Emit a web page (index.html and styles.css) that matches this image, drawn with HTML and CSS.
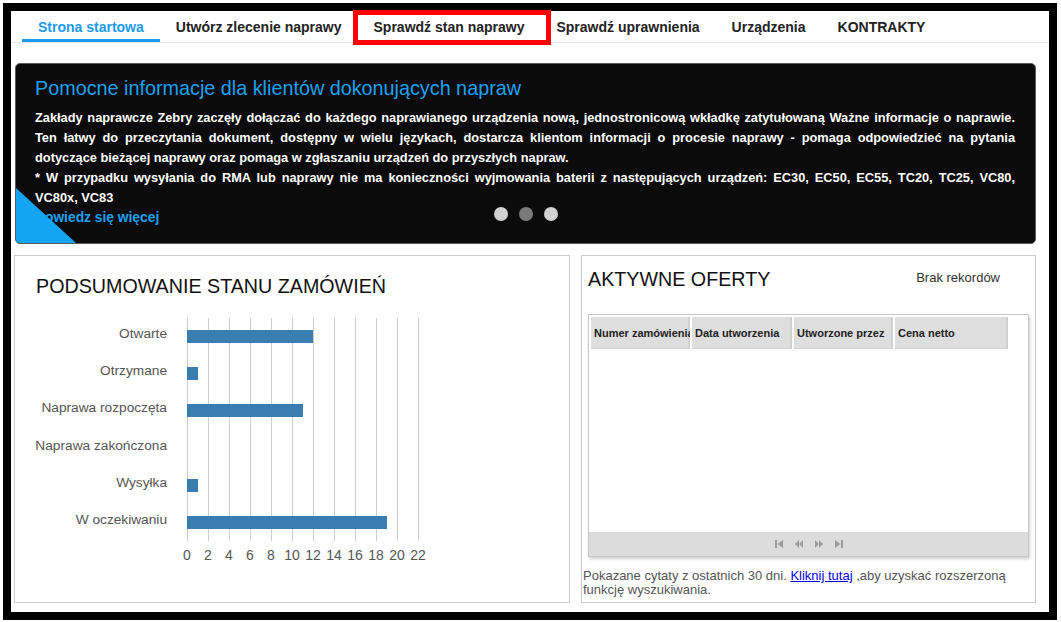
FILE: index.html
```html
<!DOCTYPE html>
<html lang="pl">
<head>
    <meta charset="UTF-8">
    <meta name="viewport" content="width=device-width, initial-scale=1.0">
    <title>Strona startowa</title>
    <link rel="stylesheet" href="styles.css">
</head>
<body>
    <div class="frame">
        <nav class="tabs">
            <a class="tab active">Strona startowa</a>
            <a class="tab">Utwórz zlecenie naprawy</a>
            <a class="tab">Sprawdź stan naprawy</a>
            <a class="tab">Sprawdź uprawnienia</a>
            <a class="tab">Urządzenia</a>
            <a class="tab">KONTRAKTY</a>
        </nav>
        <div class="callout"></div>

        <section class="banner">
            <h2 class="banner-title">Pomocne informacje dla klientów dokonujących napraw</h2>
            <p class="banner-text">Zakłady naprawcze Zebry zaczęły dołączać do każdego naprawianego urządzenia nową, jednostronicową wkładkę zatytułowaną Ważne informacje o naprawie. Ten łatwy do przeczytania dokument, dostępny w wielu językach, dostarcza klientom informacji o procesie naprawy - pomaga odpowiedzieć na pytania dotyczące bieżącej naprawy oraz pomaga w zgłaszaniu urządzeń do przyszłych napraw.<br>* W przypadku wysyłania do RMA lub naprawy nie ma konieczności wyjmowania baterii z następujących urządzeń: EC30, EC50, EC55, TC20, TC25, VC80, VC80x,&nbsp;VC83<br><a class="more">Dowiedz się więcej</a></p>
            <div class="dots">
                <span class="dot"></span>
                <span class="dot current"></span>
                <span class="dot"></span>
            </div>
            <div class="corner"></div>
        </section>

        <div class="panels">
            <section class="panel summary">
                <h3 class="panel-title">PODSUMOWANIE STANU ZAMÓWIEŃ</h3>
                <div class="chart">
                    <div class="labels">
                        <span>Otwarte</span>
                        <span>Otrzymane</span>
                        <span>Naprawa rozpoczęta</span>
                        <span>Naprawa zakończona</span>
                        <span>Wysyłka</span>
                        <span>W oczekiwaniu</span>
                    </div>
                    <div class="plot">
                        <div class="row"><span class="bar" style="width: 126px"></span></div>
                        <div class="row"><span class="bar" style="width: 10.5px"></span></div>
                        <div class="row"><span class="bar" style="width: 115.5px"></span></div>
                        <div class="row"></div>
                        <div class="row"><span class="bar" style="width: 10.5px"></span></div>
                        <div class="row"><span class="bar" style="width: 199.5px"></span></div>
                    </div>
                    <div class="axis">
                        <span>0</span><span>2</span><span>4</span><span>6</span><span>8</span><span>10</span>
                        <span>12</span><span>14</span><span>16</span><span>18</span><span>20</span><span>22</span>
                    </div>
                </div>
            </section>

            <section class="panel offers">
                <div class="offers-head">
                    <h3 class="panel-title">AKTYWNE OFERTY</h3>
                    <span class="empty">Brak rekordów</span>
                </div>
                <div class="grid">
                    <div class="grid-head">
                        <div class="cell c1">Numer zamówienia</div>
                        <div class="cell c2">Data utworzenia</div>
                        <div class="cell c3">Utworzone przez</div>
                        <div class="cell c4">Cena netto</div>
                    </div>
                    <div class="grid-body"></div>
                    <div class="pager">
                        <svg width="8" height="8" viewBox="0 0 8 8"><rect x="0" y="0" width="2" height="8" fill="#9c9c9c"/><polygon points="8,0 2.5,4 8,8" fill="#9c9c9c"/></svg>
                        <svg width="8" height="8" viewBox="0 0 8 8"><polygon points="4,0 0,4 4,8" fill="#9c9c9c"/><polygon points="8,0 4,4 8,8" fill="#9c9c9c"/></svg>
                        <svg width="8" height="8" viewBox="0 0 8 8"><polygon points="0,0 4,4 0,8" fill="#9c9c9c"/><polygon points="4,0 8,4 4,8" fill="#9c9c9c"/></svg>
                        <svg width="8" height="8" viewBox="0 0 8 8"><polygon points="0,0 5.5,4 0,8" fill="#9c9c9c"/><rect x="6" y="0" width="2" height="8" fill="#9c9c9c"/></svg>
                    </div>
                </div>
                <p class="note">Pokazane cytaty z ostatnich 30 dni. <a class="link">Kliknij tutaj</a> ,aby uzyskać rozszerzoną<br>funkcję wyszukiwania.</p>
            </section>
        </div>
    </div>
</body>
</html>
```

FILE: styles.css
```css
/* ogólne */
body {
    margin: 0;
    font-family: "Liberation Sans", Arial, sans-serif;
    background: #fff;
    overflow: hidden;
}

.frame {
    position: relative;
    margin: 3px 4px 2px 3px;
    border: 8px solid #000;
    height: 601px;
}

/* zakładki */
.tabs {
    display: flex;
    padding-left: 11px;
    height: 31px;
    border-bottom: 1px solid #e6e6e6;
}

.tab {
    padding: 4px 16px 0;
    line-height: 24px;
    font-size: 14px;
    font-weight: bold;
    color: #222;
    border-bottom: 3px solid transparent;
}

.tab.active {
    color: #1a9bec;
    border-bottom-color: #1a9bec;
}

.callout {
    position: absolute;
    left: 342px;
    top: -1px;
    width: 198px;
    height: 35px;
    box-sizing: border-box;
    border: 5px solid #f00;
}

/* baner */
.banner {
    position: relative;
    margin: 20px 13px 0 4px;
    height: 181px;
    box-sizing: border-box;
    padding: 12px 20px 0 19px;
    background: #0b0b0b;
    border: 1px solid #5a5a5a;
    border-radius: 5px;
    overflow: hidden;
}

.banner-title {
    margin: 0 0 8px;
    font-size: 19.8px;
    line-height: 24px;
    font-weight: normal;
    color: #1ba1f2;
}

.banner-text {
    margin: 0;
    font-size: 12.8px;
    line-height: 20px;
    font-weight: bold;
    color: #fff;
    text-align: justify;
}

.more {
    color: #1ba1f2;
    font-size: 13.8px;
}

.dots {
    position: absolute;
    left: 50%;
    bottom: 22px;
    transform: translateX(-50%);
    display: flex;
    gap: 11px;
}

.dot {
    width: 14px;
    height: 14px;
    border-radius: 50%;
    background: #d2d2d2;
}

.dot.current {
    background: #7a7a7a;
}

.corner {
    position: absolute;
    left: 0;
    bottom: 0;
    width: 60px;
    height: 55px;
    background: #13a5f3;
    clip-path: polygon(0 0, 0 100%, 100% 100%);
}

/* panele */
.panels {
    display: flex;
    gap: 11px;
    margin: 11px 0 0 3px;
}

.panel {
    height: 348px;
    box-sizing: border-box;
    border: 1px solid #ccc;
}

.panel-title {
    margin: 0;
    font-size: 19.7px;
    line-height: 24px;
    font-weight: normal;
    color: #111;
}

.summary {
    width: 556px;
    padding: 18px 0 0 21px;
}

.chart {
    display: grid;
    grid-template-columns: 131px 236px;
    column-gap: 20px;
    margin-top: 20px;
}

.labels {
    display: flex;
    flex-direction: column;
    align-items: flex-end;
    font-size: 13.7px;
    color: #555;
}

.labels span {
    height: 37.2px;
    line-height: 32px;
    white-space: nowrap;
}

.plot {
    height: 223px;
    background: repeating-linear-gradient(to right, #cfcfcf 0, #cfcfcf 1px, transparent 1px, transparent 21px);
}

.row {
    height: 37.2px;
    display: flex;
    align-items: center;
}

.bar {
    height: 13px;
    background: #3a7db0;
}

.axis {
    grid-column: 2;
    display: flex;
    margin: 6px 0 0 -10.5px;
    font-size: 14px;
    line-height: 16px;
    color: #555;
}

.axis span {
    width: 21px;
    flex: none;
    text-align: center;
}

/* aktywne oferty */
.offers {
    width: 455px;
    padding: 11px 0 0 1px;
}

.offers-head {
    display: flex;
    justify-content: space-between;
    align-items: flex-start;
    padding: 0 35px 0 5px;
}

.empty {
    margin-top: 3px;
    font-size: 13px;
    color: #333;
}

.grid {
    margin: 23px 0 0 5px;
    width: 441px;
    height: 243px;
    box-sizing: border-box;
    border: 1px solid #c8c8c8;
    box-shadow: 1px 2px 3px rgba(0, 0, 0, 0.2);
    display: flex;
    flex-direction: column;
}

.grid-head {
    display: flex;
    gap: 2px;
    padding: 2px 0 0 2px;
}

.cell {
    height: 32px;
    line-height: 32px;
    padding-left: 3px;
    box-sizing: border-box;
    background: #dedede;
    box-shadow: inset -2px -1px 0 #d0d0d0;
    font-size: 11px;
    font-weight: bold;
    color: #222;
    white-space: nowrap;
    overflow: hidden;
}

.c1 { width: 99px; }
.c2 { width: 100px; }
.c3 { width: 99px; }
.c4 { width: 113px; }

.grid-body {
    flex: 1;
}

.pager {
    height: 24px;
    background: #dcdcdc;
    display: flex;
    justify-content: center;
    align-items: center;
    gap: 12px;
}

.note {
    margin: 12px 0 0;
    font-size: 13px;
    line-height: 14px;
    color: #555;
}

.link {
    color: #0000ee;
    text-decoration: underline;
}
```
